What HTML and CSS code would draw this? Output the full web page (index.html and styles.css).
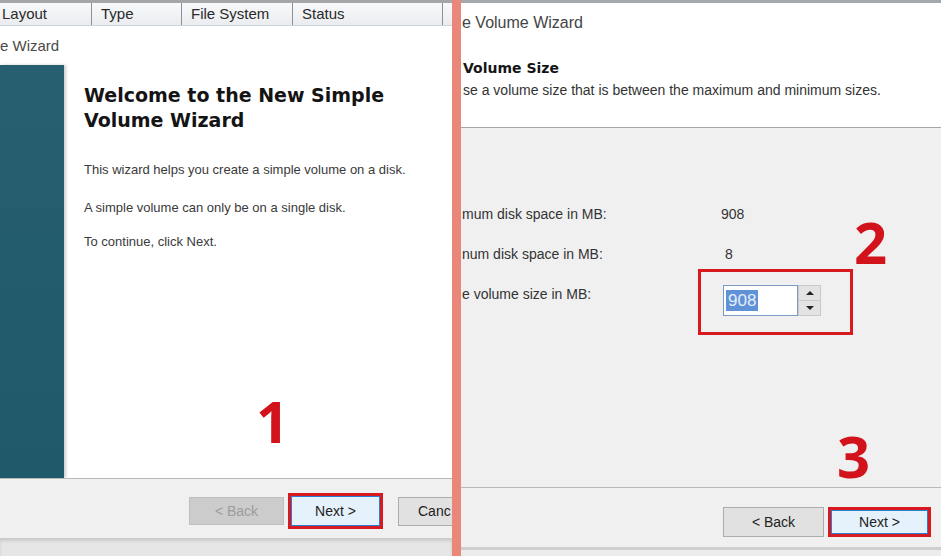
FILE: index.html
```html
<!DOCTYPE html>
<html lang="en">
<head>
  <meta charset="UTF-8" />
  <title>New Simple Volume Wizard - steps</title>
  <link rel="stylesheet" href="styles.css">
</head>
<body>

  <!-- Step 1: welcome page -->
  <section class="pane pane-left">
    <div class="col-header">
      <div class="col col-layout">Layout</div>
      <div class="col col-type">Type</div>
      <div class="col col-fs">File System</div>
      <div class="col col-status">Status</div>
      <div class="col col-rest"></div>
    </div>
    <div class="wiz-title">e Wizard</div>
    <div class="wiz-main">
      <div class="wiz-side"></div>
      <div class="wiz-content">
        <h1>Welcome to the New Simple Volume Wizard</h1>
        <p class="first">This wizard helps you create a simple volume on a disk.</p>
        <p>A simple volume can only be on a single disk.</p>
        <p>To continue, click Next.</p>
      </div>
    </div>
    <div class="wiz-footer footer-left">
      <button class="btn btn-disabled">&lt; Back</button>
      <div class="mark"><button class="btn btn-default">Next &gt;</button></div>
      <button class="btn btn-cancel">Canc</button>
    </div>
    <div class="wiz-bottom"></div>
    <div class="step step-1">1</div>
  </section>

  <div class="divider"></div>

  <!-- Step 2/3: volume size page -->
  <section class="pane pane-right">
    <div class="rw-top"></div>
    <div class="rw-title">e Volume Wizard</div>
    <div class="rw-head">
      <h2>Volume Size</h2>
      <div class="rw-sub">se a volume size that is between the maximum and minimum sizes.</div>
    </div>
    <div class="rw-body">
      <div class="size-grid">
        <div class="lbl">mum disk space in MB:</div>
        <div class="val">908</div>
        <div class="lbl">num disk space in MB:</div>
        <div class="val val-min">8</div>
        <div class="lbl">e volume size in MB:</div>
        <div class="spin">
          <div class="spin-input"><span class="sel">908</span></div>
          <div class="spin-btns">
            <div class="spin-btn"><span class="tri-up"></span></div>
            <div class="spin-btn"><span class="tri-down"></span></div>
          </div>
        </div>
      </div>
    </div>
    <div class="wiz-footer footer-right">
      <button class="btn btn-back">&lt; Back</button>
      <div class="mark mark-right"><button class="btn btn-default">Next &gt;</button></div>
    </div>
    <div class="rw-bottom"></div>

    <div class="mark-box"></div>
    <div class="step step-2">2</div>
    <div class="step step-3">3</div>
  </section>

</body>
</html>
```

FILE: styles.css
```css
body {
  margin: 0;
  width: 941px;
  height: 556px;
  display: flex;
  overflow: hidden;
  background: #ffffff;
  font-family: "Liberation Sans", Arial, sans-serif;
  color: #222;
}

.pane {
  display: flex;
  flex-direction: column;
  position: relative;
  overflow: hidden;
  background: #ffffff;
}

.pane-left {
  width: 452px;
  flex: none;
}

.pane-right {
  flex: 1;
}

.divider {
  width: 9px;
  flex: none;
  background: #e9887a;
}

/* disk management column header behind the wizard */
.col-header {
  height: 22px;
  flex: none;
  display: flex;
  border-top: 3px solid #a4a6a9;
  border-bottom: 1px solid #cdd3da;
  background: linear-gradient(#f8f9fb, #eaecef);
}

.col {
  box-sizing: border-box;
  padding-left: 9px;
  font-size: 15px;
  line-height: 22px;
  color: #2a2a2a;
  border-right: 1px solid #8c8f93;
  white-space: nowrap;
}

.col-layout { width: 92px; padding-left: 2px; }
.col-type { width: 90px; }
.col-fs { width: 111px; }
.col-status { width: 150px; }
.col-rest { flex: 1; border-right: none; }

.wiz-title {
  height: 39px;
  flex: none;
  line-height: 39px;
  font-size: 15px;
  color: #4a4a4a;
  white-space: nowrap;
}

.wiz-main {
  flex: 1;
  display: flex;
}

.wiz-side {
  width: 64px;
  flex: none;
  background: linear-gradient(#275f70, #235c6d 50%, #1f5a6b);
  box-shadow: 2px 0 3px rgba(0, 0, 0, 0.2);
}

.wiz-content {
  flex: 1;
  padding: 18px 0 0 20px;
}

.wiz-content h1 {
  margin: 0 0 29px;
  font-family: "DejaVu Sans", Verdana, sans-serif;
  font-weight: bold;
  font-size: 19px;
  line-height: 25px;
  color: #141414;
}

.wiz-content p {
  margin: 0 0 18px;
  font-size: 13px;
  line-height: 16px;
  color: #3a3a3a;
  white-space: nowrap;
}

.wiz-content p.first {
  margin-bottom: 22px;
}

/* buttons row */
.wiz-footer {
  height: 60px;
  flex: none;
  display: flex;
  align-items: center;
  box-sizing: border-box;
  border-top: 1px solid #b8b8b8;
  background: #f0f0f0;
}

.footer-left {
  padding: 5px 0 0 189px;
}

.footer-right {
  padding: 9px 0 0 262px;
}

.btn {
  box-sizing: border-box;
  height: 28px;
  padding: 0;
  font-family: "Liberation Sans", Arial, sans-serif;
  font-size: 14px;
  color: #222;
  background: #e1e1e1;
  border: 1px solid #adadad;
  flex: none;
}

.btn-disabled {
  width: 95px;
  background: #cccccc;
  border-color: #bfbfbf;
  color: #9c9c9c;
}

.btn-default {
  display: block;
  width: 89px;
  height: 30px;
  background: #e5f1fb;
  border: 1px solid #2a7fd4;
}

.btn-cancel {
  width: 54px;
  height: 29px;
  margin-left: 15px;
  padding-left: 19px;
  text-align: left;
  border-right: none;
  overflow: hidden;
}

.btn-back {
  width: 101px;
  height: 30px;
}

.mark {
  flex: none;
  margin-left: 4px;
  border: 3px solid #d71920;
}

.mark-right .btn-default {
  width: 97px;
  height: 24px;
}

.wiz-bottom {
  height: 18px;
  flex: none;
  background: #e6e6e6;
  box-shadow: inset 0 3px 3px rgba(0, 0, 0, 0.12);
}

/* right wizard page */
.rw-top {
  height: 3px;
  flex: none;
  background: #a4a7ab;
}

.rw-title {
  height: 40px;
  flex: none;
  line-height: 40px;
  padding-left: 1px;
  font-size: 16px;
  color: #454545;
  white-space: nowrap;
}

.rw-head {
  height: 85px;
  flex: none;
  box-sizing: border-box;
  padding: 16px 0 0 2px;
  border-bottom: 1px solid #a6a6a6;
  box-shadow: 0 1px 0 #d8d8d8;
}

.rw-head h2 {
  margin: 0 0 4px;
  font-family: "DejaVu Sans", Verdana, sans-serif;
  font-size: 14px;
  line-height: 18px;
  color: #151515;
}

.rw-sub {
  font-size: 14px;
  line-height: 18px;
  color: #333;
  white-space: nowrap;
}

.rw-body {
  flex: 1;
  background: #f0f0f0;
  padding: 76px 0 0 1px;
}

.size-grid {
  display: grid;
  grid-template-columns: 259px auto;
  grid-auto-rows: 20px;
  row-gap: 20px;
  align-items: start;
}

.lbl,
.val {
  font-size: 14px;
  line-height: 20px;
  color: #333;
  white-space: nowrap;
}

.val-min {
  padding-left: 4px;
}

.spin {
  display: flex;
  margin: 1px 0 0 2px;
}

.spin-input {
  width: 75px;
  height: 31px;
  box-sizing: border-box;
  border: 1px solid #7c9cc4;
  background: #ffffff;
  padding: 4px 0 0 2px;
}

.sel {
  display: inline-block;
  padding: 0 2px;
  font-size: 17px;
  line-height: 21px;
  background: #5f92d6;
  color: #e6eefa;
}

.spin-btns {
  width: 23px;
  height: 31px;
  box-sizing: border-box;
  display: flex;
  flex-direction: column;
  gap: 1px;
  padding: 1px 0;
  background: #c9c9c9;
}

.spin-btn {
  flex: 1;
  display: flex;
  align-items: center;
  justify-content: center;
  background: #e3e3e3;
  margin: 0 1px;
}

.tri-up,
.tri-down {
  width: 0;
  height: 0;
  border-left: 4px solid transparent;
  border-right: 4px solid transparent;
}

.tri-up { border-bottom: 4px solid #222; }
.tri-down { border-top: 4px solid #222; }

.rw-bottom {
  height: 9px;
  flex: none;
  box-sizing: border-box;
  background: #ececec;
  border-top: 3px solid #cfcfcf;
}

/* annotations over the screenshots */
.mark-box {
  position: absolute;
  left: 237px;
  top: 269px;
  width: 149px;
  height: 60px;
  border: 3px solid #d71920;
}

.step {
  position: absolute;
  font-family: "Open Sans", sans-serif;
  font-weight: bold;
  font-size: 58px;
  line-height: 58px;
  color: #d3131c;
}

.step-1 { left: 256px; top: 392px; }
.step-2 { left: 393px; top: 213px; }
.step-3 { left: 376px; top: 427px; }
```
